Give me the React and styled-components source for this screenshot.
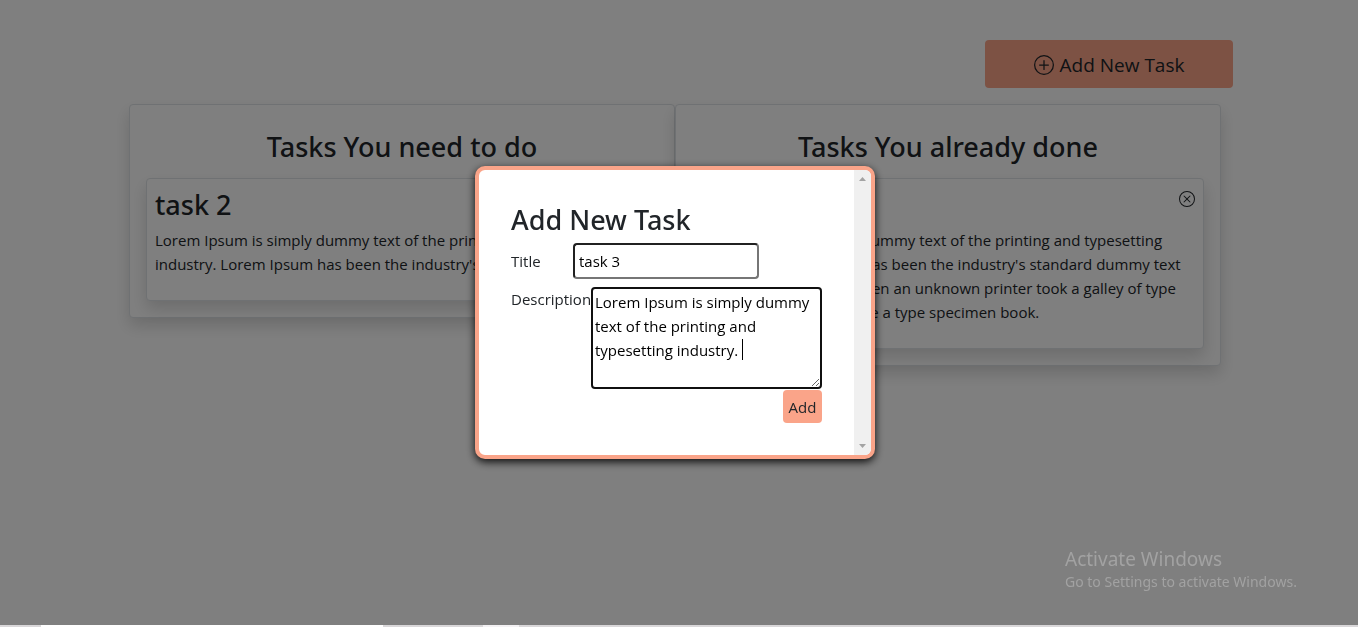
import React from "react";
import styled, { createGlobalStyle } from "styled-components";
import { BsPlusCircle, BsXCircle } from "react-icons/bs";

const GlobalStyle = createGlobalStyle`
  *, *::before, *::after { box-sizing: border-box; }
  body {
    margin: 0;
    background: #fff;
    color: #212529;
    font-family: "Open Sans", "Noto Sans", sans-serif;
    font-size: 15px;
    line-height: 24px;
  }
  button, input, textarea { font: inherit; color: inherit; }
  h2, h3, p { margin: 0; }
  h2, h3 {
    font-family: "Noto Sans", "Open Sans", sans-serif;
    font-size: 27px;
    line-height: 36px;
    font-weight: 500;
  }
`;

const Page = styled.div`
  min-height: 100vh;
  padding: 40px 8px 40px 0;
`;

const Container = styled.main`
  width: 100%;
  max-width: 1116px;
  margin: 0 auto;
`;

const Toolbar = styled.div`
  display: flex;
  justify-content: flex-end;
  margin-bottom: 16px;
`;

const NewTaskButton = styled.button`
  display: flex;
  align-items: center;
  justify-content: center;
  gap: 6px;
  width: 248px;
  height: 48px;
  padding: 2px 0 0;
  border: 0;
  border-radius: 4px;
  background: #faa489;
  font-size: 19px;
`;

const Board = styled.div`
  display: grid;
  grid-template-columns: 1fr 1fr;
  align-items: start;
  padding: 0 12px;
`;

const Box = styled.section`
  border: 1px solid #dee2e6;
  border-radius: 4px;
  background: #fff;
  box-shadow: 0 8px 16px rgba(0, 0, 0, 0.15);
`;

const Panel = styled(Box)`
  padding: 16px;
`;

const PanelTitle = styled.h2`
  padding: 8px 0 13px;
  text-align: center;
`;

const Card = styled(Box).attrs({ as: "article" })`
  padding: 8px 8px 24px;
`;

const CardHead = styled.div`
  display: flex;
  justify-content: space-between;
  margin-bottom: 5px;
`;

const CloseButton = styled.button`
  display: flex;
  align-items: center;
  height: 24px;
  padding: 0;
  border: 0;
  background: none;
`;

const Overlay = styled.div`
  position: fixed;
  inset: 0;
  display: flex;
  align-items: center;
  justify-content: center;
  padding: 0 8px 2px 0;
  background: rgba(0, 0, 0, 0.5);
`;

const Dialog = styled.div`
  display: flex;
  width: 400px;
  overflow: hidden;
  border: 4px solid #faa489;
  border-radius: 10px;
  background: #fff;
  box-shadow: 0 3px 8px rgba(0, 0, 0, 0.9);
`;

const Form = styled.form`
  flex: 1;
  min-width: 0;
  padding: 32px;
`;

const FormTitle = styled.h2`
  padding-bottom: 5px;
`;

const Field = styled.div`
  display: flex;
  align-items: ${(p) => (p.$top ? "flex-start" : "center")};
  margin-bottom: ${(p) => (p.$top ? 1 : 8)}px;
`;

const Label = styled.label`
  flex: none;
  width: ${(p) => p.$width}px;
`;

const TitleInput = styled.input`
  width: 186px;
  height: 36px;
  padding: 0 4px;
  border: 2px inset #767676;
  border-radius: 4px;
  outline: 0;
  color: #000;
`;

const TextWrap = styled.div`
  position: relative;
  display: flex;
  flex: 1;
  min-width: 0;
`;

const DescriptionInput = styled.textarea`
  width: 100%;
  height: 102px;
  padding: 1px 2px;
  border: 2px solid #101010;
  border-radius: 4px;
  outline: 0;
  color: #000;
  caret-color: transparent;
`;

const Caret = styled.span`
  position: absolute;
  left: 151px;
  top: 52px;
  width: 1px;
  height: 21px;
  background: #000;
`;

const Actions = styled.div`
  display: flex;
  justify-content: flex-end;
`;

const AddButton = styled.button`
  width: 39px;
  height: 33px;
  padding: 0;
  border: 0;
  border-radius: 4px;
  background: #faa489;
`;

const ScrollTrack = styled.div`
  display: flex;
  flex-direction: column;
  align-items: center;
  justify-content: space-between;
  width: 17px;
  padding: 7px 0;
  background: #f0f0f0;
`;

const Watermark = styled.aside`
  position: fixed;
  right: 53px;
  bottom: 34px;
  width: 240px;
  color: #a2a2a2;
  font-family: "Noto Sans", "Open Sans", sans-serif;
  font-size: 14px;
  line-height: 22px;
  white-space: nowrap;
`;

const WatermarkTitle = styled.div`
  font-size: 19px;
  line-height: 24px;
`;

const Taskbar = styled.div`
  position: fixed;
  left: 0;
  right: 0;
  bottom: 0;
  display: flex;
  height: 2px;
  background: #d9d7d9;
`;

const TaskbarPart = styled.span`
  width: ${(p) => p.$width}px;
  background: ${(p) => p.$color || "transparent"};
`;

function TaskCard({ title, children }) {
  return (
    <Card>
      <CardHead>
        <h3>{title}</h3>
        <CloseButton type="button" aria-label={`Remove ${title}`}>
          <BsXCircle size={16} />
        </CloseButton>
      </CardHead>
      <p>{children}</p>
    </Card>
  );
}

export default function App() {
  return (
    <>
      <GlobalStyle />
      <Page>
        <Container>
          <Toolbar>
            <NewTaskButton type="button">
              <BsPlusCircle size={20} />
              Add New Task
            </NewTaskButton>
          </Toolbar>
          <Board>
            <Panel>
              <PanelTitle>Tasks You need to do</PanelTitle>
              <TaskCard title="task 2">
                Lorem Ipsum is simply dummy text of the printing and typesetting
                <br />
                industry. Lorem Ipsum has been the industry's
              </TaskCard>
            </Panel>
            <Panel>
              <PanelTitle>Tasks You already done</PanelTitle>
              <TaskCard title="task 1">
                Lorem Ipsum is simply dummy text of the printing and typesetting
                <br />
                industry. Lorem Ipsum has been the industry's standard dummy text
                <br />
                ever since the 1500s, when an unknown printer took a galley of type
                <br />
                and scrambled it to make a type specimen book.
              </TaskCard>
            </Panel>
          </Board>
        </Container>
      </Page>
      <Overlay>
        <Dialog role="dialog" aria-modal="true" aria-labelledby="form-title">
          <Form onSubmit={(e) => e.preventDefault()}>
            <FormTitle id="form-title">Add New Task</FormTitle>
            <Field>
              <Label htmlFor="title" $width={62}>Title</Label>
              <TitleInput id="title" type="text" defaultValue="task 3" />
            </Field>
            <Field $top>
              <Label htmlFor="description" $width={80}>Description</Label>
              <TextWrap>
                <DescriptionInput
                  id="description"
                  defaultValue="Lorem Ipsum is simply dummy text of the printing and typesetting industry. "
                />
                <Caret />
              </TextWrap>
            </Field>
            <Actions>
              <AddButton type="submit">Add</AddButton>
            </Actions>
          </Form>
          <ScrollTrack aria-hidden="true">
            <svg width="7" height="4" viewBox="0 0 7 4">
              <path d="M0 4L3.500 0L7 4Z" fill="#a3a3a3" />
            </svg>
            <svg width="7" height="4" viewBox="0 0 7 4">
              <path d="M0 0L3.500 4L7 0Z" fill="#a3a3a3" />
            </svg>
          </ScrollTrack>
        </Dialog>
      </Overlay>
      <Watermark>
        <WatermarkTitle>Activate Windows</WatermarkTitle>
        Go to Settings to activate Windows.
      </Watermark>
      <Taskbar aria-hidden="true">
        <TaskbarPart $width={41} />
        <TaskbarPart $width={342} $color="#fff" />
        <TaskbarPart $width={100} />
        <TaskbarPart $width={36} $color="#f3f1f3" />
      </Taskbar>
    </>
  );
}
